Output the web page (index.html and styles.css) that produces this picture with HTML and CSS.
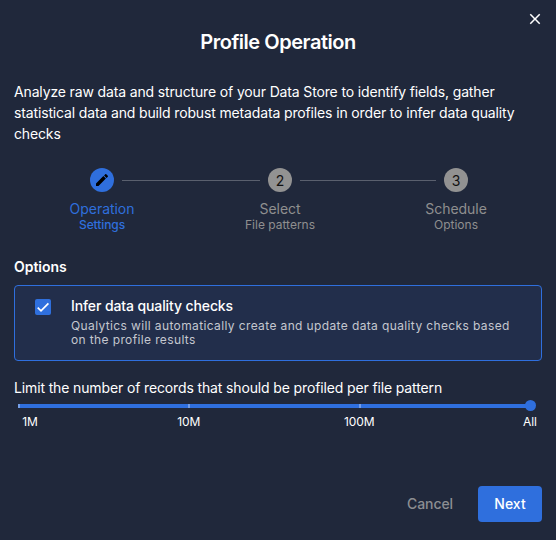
FILE: index.html
```html
<!DOCTYPE html>
<html lang="en">
<head>
<meta charset="utf-8">
<title>Profile Operation</title>
<link rel="stylesheet" href="styles.css">
</head>
<body>
<main class="dialog">
  <header class="header">
    <h1 class="title">Profile Operation</h1>
    <button class="close" aria-label="Close"><svg width="18" height="18" viewBox="0 0 24 24"><path fill="currentColor" d="M19 6.41 17.59 5 12 10.59 6.41 5 5 6.41 10.59 12 5 17.59 6.41 19 12 13.41 17.59 19 19 17.59 13.41 12z"/></svg></button>
  </header>
  <p class="description">Analyze raw data and structure of your Data Store to identify fields, gather statistical data and build robust metadata profiles in order to infer data quality checks</p>
  <div class="stepper">
    <div class="step active">
      <span class="circle"><svg width="16" height="16" viewBox="0 0 24 24"><path fill="currentColor" d="M20.71 7.04c.39-.39.39-1.04 0-1.41l-2.34-2.34c-.37-.39-1.02-.39-1.41 0l-1.84 1.83 3.75 3.75M3 17.25V21h3.75L17.81 9.93l-3.75-3.75z"/></svg></span>
      <span class="step-name">Operation</span>
      <span class="step-sub">Settings</span>
    </div>
    <span class="line first"></span>
    <div class="step">
      <span class="circle">2</span>
      <span class="step-name">Select</span>
      <span class="step-sub">File patterns</span>
    </div>
    <span class="line"></span>
    <div class="step">
      <span class="circle">3</span>
      <span class="step-name">Schedule</span>
      <span class="step-sub">Options</span>
    </div>
  </div>
  <h2 class="section">Options</h2>
  <div class="option">
    <span class="checkbox"><svg width="16" height="16" viewBox="0 0 16 16"><path fill="none" stroke="currentColor" stroke-width="1.7" d="M2.7 8.6 6 11.8 13.4 4.3"/></svg></span>
    <div class="option-text">
      <div class="option-title">Infer data quality checks</div>
      <div class="option-sub">Qualytics will automatically create and update data quality checks based on the profile results</div>
    </div>
  </div>
  <div class="limit">Limit the number of records that should be profiled per file pattern</div>
  <div class="slider">
    <i class="tick"></i><i class="tick"></i><i class="tick"></i><i class="thumb"></i>
  </div>
  <div class="labels"><span>1M</span><span>10M</span><span>100M</span><span>All</span></div>
  <footer class="actions">
    <button class="cancel">Cancel</button>
    <button class="next">Next</button>
  </footer>
</main>
</body>
</html>
```
FILE: styles.css
```css
* { box-sizing: border-box; }
body {
  margin: 0;
  background: #20283b;
  color: #fff;
  font-family: Inter, sans-serif;
  font-size: 14px;
}
button { border: 0; background: none; font: inherit; padding: 0; color: inherit; }
svg { display: block; }
.dialog { position: relative; width: 556px; height: 540px; padding: 26px 14px 0; overflow: hidden; }
.title { margin: 0; text-align: center; font-size: 20px; line-height: 32px; font-weight: 600; letter-spacing: -0.46px; }
.close { position: absolute; top: 9.5px; right: 12px; }
.description { margin: 23px 0 0; line-height: 21px; height: 63px; letter-spacing: -0.145px; }
.stepper { display: flex; align-items: flex-start; margin: 24px 0 0; padding: 0 66px 0 68px; height: 66px; }
.step { flex: none; width: 40px; display: flex; flex-direction: column; align-items: center; color: #8f8f8f; white-space: nowrap; }
.circle { width: 24px; height: 24px; border-radius: 50%; background: #929292; color: #111; display: flex; align-items: center; justify-content: center; font-size: 14px; padding-top: 1px; }
.step-name { margin-top: 9px; font-size: 14px; line-height: 16px; letter-spacing: -0.04px; }
.step-sub { font-size: 12px; line-height: 16px; }
.active { color: #2f6fdd; }
.active .circle { background: #2f6fdd; color: #000; padding-top: 0; }
.active .step-sub { font-weight: 500; letter-spacing: -0.1px; }
.line { flex: 136; height: 1px; margin-top: 12px; background: #5a606e; }
.line.first { flex: 138; }
.section { margin: 23px 0 0; font-size: 14px; line-height: 20px; font-weight: 600; letter-spacing: -0.03px; }
.option { display: flex; height: 76px; margin-top: 8px; padding: 12px 20px; border: 1px solid #2f6fdd; border-radius: 4px; background: #222e4b; }
.checkbox { flex: none; width: 16px; height: 16px; margin-top: 1px; border-radius: 2px; background: #2f6fdd; }
.option-text { margin: -1px 0 0 20px; }
.option-title { font-weight: 500; line-height: 18px; letter-spacing: -0.11px; }
.option-sub { margin-top: 4px; font-size: 12px; line-height: 14px; letter-spacing: 0.375px; color: #c4c7cf; }
.limit { margin-top: 17px; line-height: 20px; letter-spacing: -0.135px; }
.slider { position: relative; display: flex; justify-content: space-between; height: 4px; margin: 6px 11px 0 4px; border-radius: 2px; background: #2f6fdd; }
.tick { width: 2px; height: 4px; background: #739ee8; }
.thumb { width: 2px; height: 4px; }
.thumb::after { content: ""; position: absolute; top: -4px; right: -5px; width: 11px; height: 11px; border-radius: 50%; background: #2f6fdd; }
.labels { display: flex; justify-content: space-between; margin: 6px -8px 0 -16px; font-size: 12px; line-height: 16px; letter-spacing: -0.1px; }
.labels span { width: 40px; text-align: center; }
.labels span:first-child { padding-left: 24px; }
.actions { display: flex; justify-content: flex-end; gap: 16px; margin-top: 56px; font-weight: 500; }
.cancel, .next { width: 64px; height: 36px; padding-bottom: 1px; }
.cancel { color: #8c8e92; letter-spacing: -0.1px; }
.next { border-radius: 4px; background: #2f6fdd; }
```
